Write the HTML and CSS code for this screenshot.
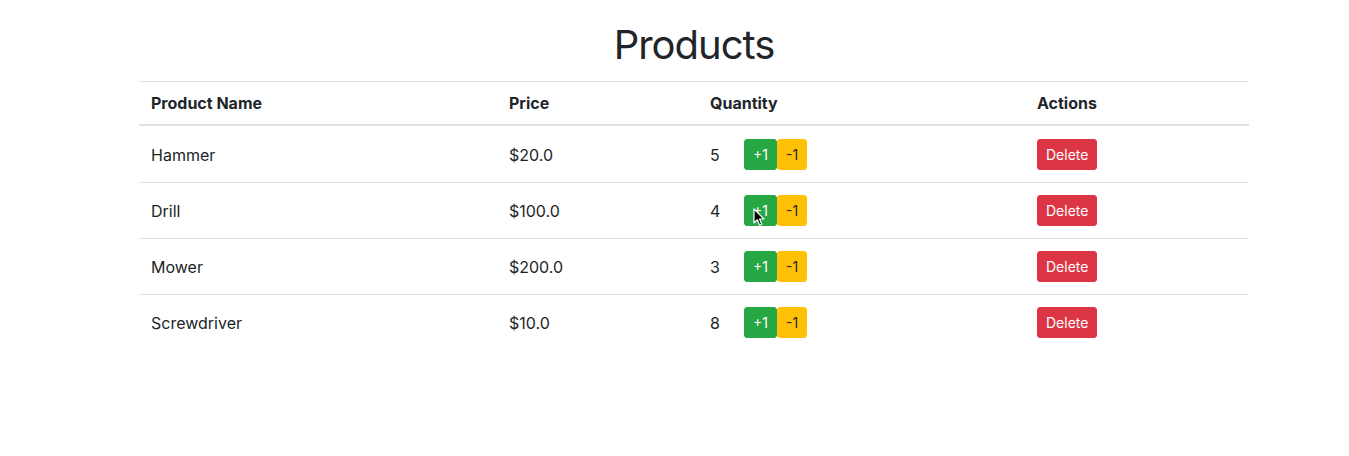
FILE: index.html
```html
<!DOCTYPE html>
<html lang="en">
<head>
<meta charset="utf-8">
<title>Products</title>
<link rel="stylesheet" href="styles.css">
</head>
<body>
<div class="container">
  <h1 class="title">Products</h1>
  <table class="table">
    <thead>
      <tr>
        <th class="col-name">Product Name</th>
        <th class="col-price">Price</th>
        <th class="col-qty">Quantity</th>
        <th class="col-actions">Actions</th>
      </tr>
    </thead>
    <tbody>
      <tr>
        <td>Hammer</td>
        <td>$20.0</td>
        <td><div class="qty"><span class="qty-value">5</span><button class="btn btn-success">+1</button><button class="btn btn-warning">-1</button></div></td>
        <td><button class="btn btn-danger">Delete</button></td>
      </tr>
      <tr>
        <td>Drill</td>
        <td>$100.0</td>
        <td><div class="qty"><span class="qty-value">4</span><span class="cursor-anchor"><button class="btn btn-success">+1</button><svg class="cursor" width="12" height="19" viewBox="0 0 12 19"><path d="M1 1 L1 15 L4.3 11.8 L6.6 17.2 L8.8 16.3 L6.5 11 L11 11 Z" fill="#000" stroke="#fff" stroke-width="1.2" stroke-linejoin="round"/></svg></span><button class="btn btn-warning">-1</button></div></td>
        <td><button class="btn btn-danger">Delete</button></td>
      </tr>
      <tr>
        <td>Mower</td>
        <td>$200.0</td>
        <td><div class="qty"><span class="qty-value">3</span><button class="btn btn-success">+1</button><button class="btn btn-warning">-1</button></div></td>
        <td><button class="btn btn-danger">Delete</button></td>
      </tr>
      <tr>
        <td>Screwdriver</td>
        <td>$10.0</td>
        <td><div class="qty"><span class="qty-value">8</span><button class="btn btn-success">+1</button><button class="btn btn-warning">-1</button></div></td>
        <td><button class="btn btn-danger">Delete</button></td>
      </tr>
    </tbody>
  </table>
</div>
</body>
</html>
```

FILE: styles.css
```css
html, body {
  margin: 0;
  padding: 0;
  background: #fff;
}
body {
  font-family: Inter, "Liberation Sans", Arial, sans-serif;
  font-size: 16px;
  color: #212529;
}
.container {
  width: 1110px;
  margin-left: 139px;
}
.title {
  margin: 0;
  padding-top: 19px;
  padding-bottom: 10px;
  text-align: center;
  font-size: 40px;
  font-weight: 400;
  line-height: 52px;
  letter-spacing: -1px;
}
.table {
  width: 100%;
  border-collapse: collapse;
}
.table th, .table td {
  padding: 12px;
  text-align: left;
  vertical-align: middle;
  border-top: 1px solid #dee2e6;
}
.table th {
  font-weight: 700;
  line-height: 18px;
  border-bottom: 2px solid #dee2e6;
  vertical-align: bottom;
}
.table td {
  line-height: 24px;
}
.table tbody tr:first-child td {
  padding-top: 13px;
}
.col-name { width: 334px; }
.col-price { width: 177px; }
.col-qty { width: 303px; }
.qty {
  display: flex;
  align-items: center;
}
.qty-value {
  width: 34px;
}
.cursor-anchor {
  position: relative;
  display: inline-flex;
}
.cursor {
  position: absolute;
  left: 9px;
  top: 13px;
  pointer-events: none;
}
.btn {
  font-family: inherit;
  font-size: 14px;
  line-height: 21px;
  padding: 4px 8px;
  border: 1px solid transparent;
  border-radius: 3px;
  margin: 0;
  display: inline-block;
  cursor: pointer;
}
.btn-success {
  background: #28a745;
  border-color: #28a745;
  color: #fff;
}
.btn-warning {
  background: #ffc107;
  border-color: #ffc107;
  color: #212529;
}
.btn-danger {
  background: #dc3545;
  border-color: #dc3545;
  color: #fff;
}
```
